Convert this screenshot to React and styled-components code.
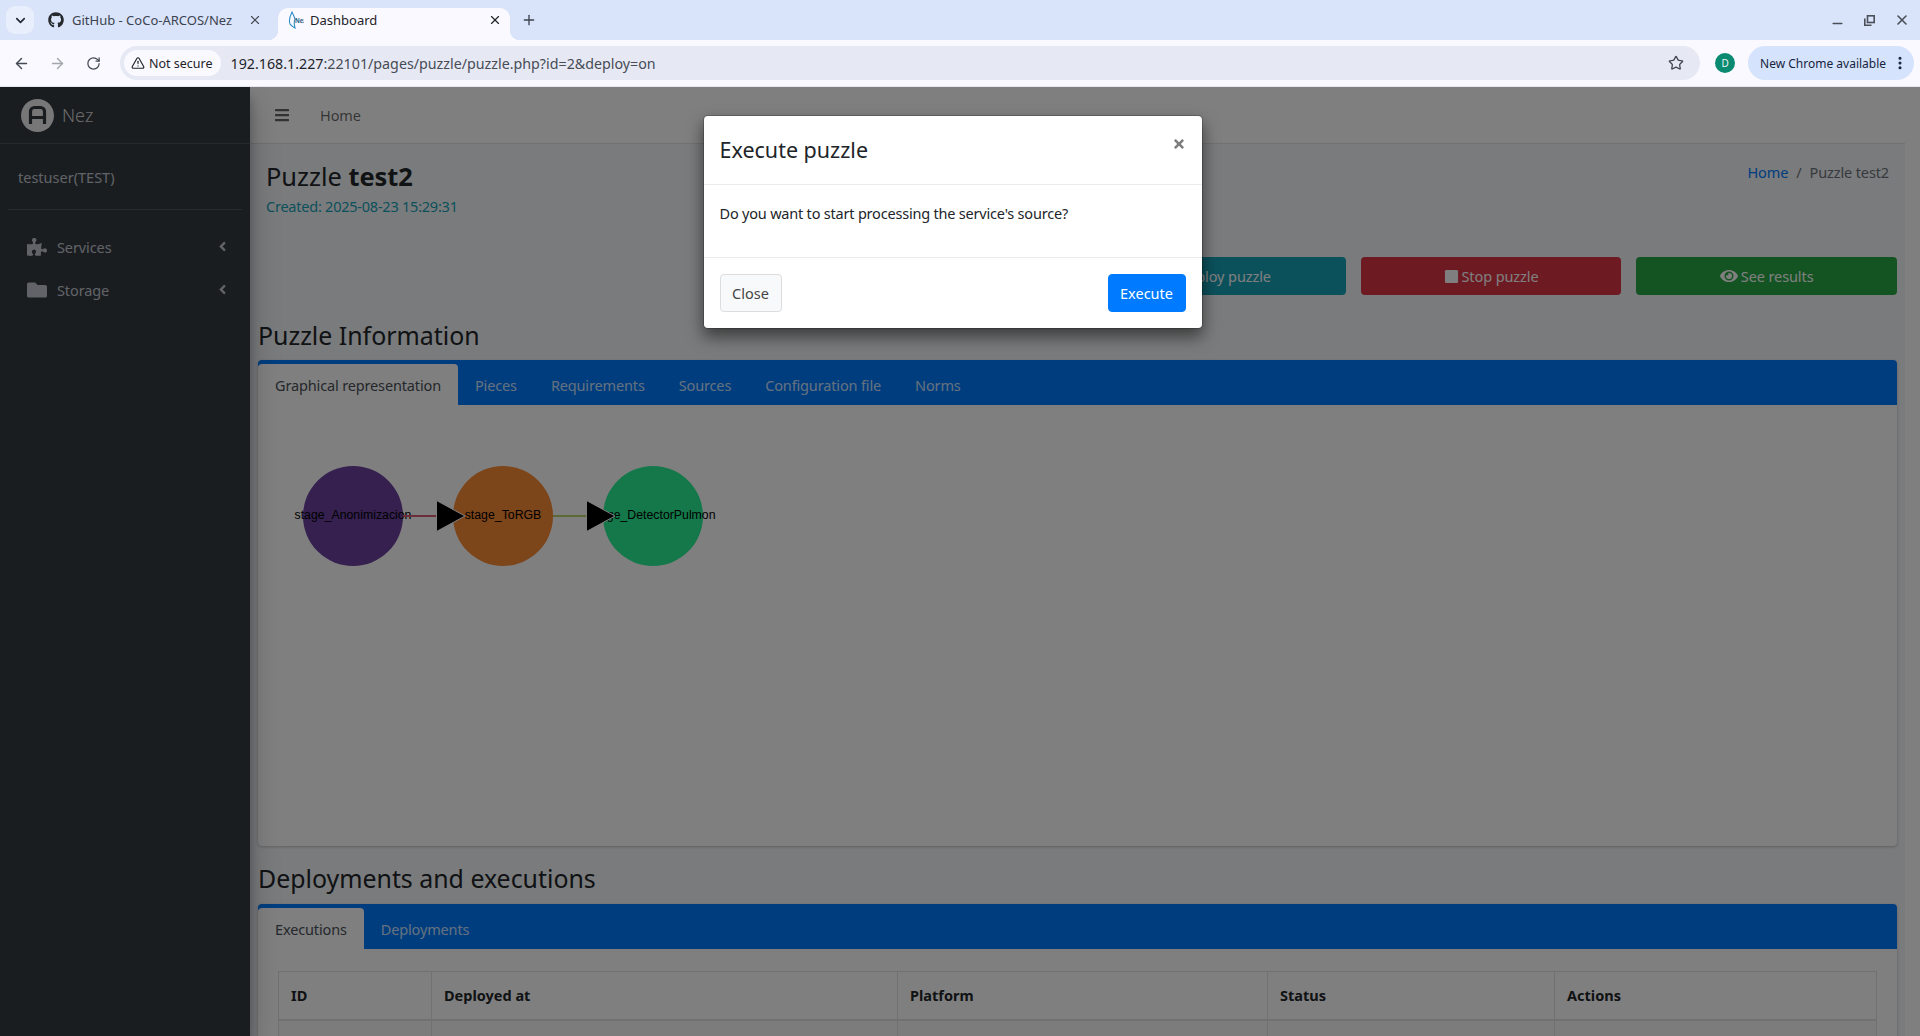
import React from 'react'
import styled, { createGlobalStyle } from 'styled-components'
import { FaGithub, FaPuzzlePiece, FaFolder, FaAngleLeft, FaBars, FaStop, FaEye, FaTimes, FaCloudUploadAlt } from 'react-icons/fa'
import { ArrowLeft, ArrowRight, RotateCw, Star, TriangleAlert, EllipsisVertical, ChevronDown, X, Plus, Minus } from 'lucide-react'

const Global = createGlobalStyle`
    html, body { margin: 0; height: 100%; overflow: hidden; }
    body { font-family: "Noto Sans", "Open Sans", sans-serif; color: #212529; }
    #root { height: 100%; }
    * { box-sizing: border-box; }
`

const Screen = styled.div`
    display: flex;
    flex-direction: column;
    width: 1920px;
    height: 1036px;
`

/* browser chrome */
const TabStrip = styled.div`
    display: flex;
    align-items: flex-end;
    height: 40px;
    padding-left: 6px;
    background: #d9e3f9;
`
const ExpandBtn = styled.div`
    display: flex;
    align-items: center;
    justify-content: center;
    width: 28px;
    height: 28px;
    margin: 0 4px 6px 0;
    border-radius: 9px;
    background: #e8eefc;
    color: #1f2937;
`
const Tab = styled.div`
    position: relative;
    display: flex;
    align-items: center;
    width: 232px;
    height: 32px;
    margin-right: 8px;
    padding: 0 8px 8px 10px;
    border-radius: 10px 10px 0 0;
    font-size: 13px;
    color: ${p => (p.$active ? '#1f2328' : '#3c4350')};
    background: ${p => (p.$active ? '#f9f9ff' : 'transparent')};
    ${p => p.$active && `
        &::before, &::after {
            content: '';
            position: absolute;
            bottom: 0;
            width: 10px;
            height: 10px;
        }
        &::before { left: -10px; background: radial-gradient(circle at 0 0, transparent 10px, #f9f9ff 10.5px); }
        &::after { right: -10px; background: radial-gradient(circle at 100% 0, transparent 10px, #f9f9ff 10.5px); }
    `}
`
const TabTitle = styled.span`
    flex: 1;
    min-width: 0;
    margin-left: ${p => p.$gap}px;
    white-space: nowrap;
`
const WindowControls = styled.div`
    display: flex;
    align-items: center;
    gap: 19px;
    margin-left: auto;
    padding: 0 10px 0 0;
    height: 40px;
    color: #4a4f58;
`
const NewTab = styled.div`
    display: flex;
    align-items: center;
    margin: 0 0 12px 3px;
    color: #3c4350;
`
const Toolbar = styled.div`
    display: flex;
    align-items: center;
    height: 47px;
    padding: 0 6px 0 13px;
    background: #f9f9ff;
    border-bottom: 1px solid #e6e6ee;
`
const NavIcon = styled.div`
    display: flex;
    justify-content: center;
    width: 18px;
    margin-right: 18px;
    color: ${p => (p.$off ? '#a3a7ad' : '#444a52')};
`
const AddressBar = styled.div`
    display: flex;
    align-items: center;
    width: 1581px;
    height: 34px;
    margin-left: -1px;
    padding: 0 16px 0 4px;
    border-radius: 17px;
    background: #e6e9f4;
    font-size: 14.25px;
`
const SecureChip = styled.div`
    display: flex;
    align-items: center;
    gap: 4px;
    height: 26px;
    padding: 0 8px 0 7px;
    border-radius: 13px;
    background: #f9f9ff;
    font-size: 12.5px;
    color: #1f2328;
`
const Url = styled.div`
    flex: 1;
    margin-left: 10px;
    color: #474c55;
    white-space: nowrap;
    b { font-weight: 400; color: #1f2328; }
`
const Avatar = styled.div`
    display: flex;
    align-items: center;
    justify-content: center;
    width: 20px;
    height: 20px;
    margin: 0 13px 0 15px;
    border-radius: 50%;
    background: #0b8a72;
    color: #e9f5f2;
    font-size: 10px;
`
const UpdatePill = styled.div`
    display: flex;
    align-items: center;
    justify-content: space-between;
    width: 166px;
    height: 34px;
    padding: 0 6px 0 12px;
    border-radius: 17px;
    background: #d5e3fc;
    color: #16233f;
    font-size: 12px;
    white-space: nowrap;
`

/* page */
const Page = styled.div`
    position: relative;
    flex: 1;
    display: flex;
    min-height: 0;
    overflow: hidden;
    background: #fff;
`
const Sidebar = styled.aside`
    width: 250px;
    flex-shrink: 0;
    background: #343a40;
    color: #c2c7d0;
    box-shadow: 0 14px 28px rgba(0, 0, 0, 0.25), 0 10px 10px rgba(0, 0, 0, 0.22);
    z-index: 1;
`
const Brand = styled.div`
    display: flex;
    align-items: center;
    gap: 8px;
    height: 57px;
    padding-left: 21px;
    border-bottom: 1px solid #4b545c;
    font-size: 18px;
    font-weight: 300;
    color: rgba(255, 255, 255, 0.8);
`
const UserPanel = styled.div`
    display: flex;
    align-items: center;
    height: 66px;
    margin: 0 8px;
    padding-left: 10px;
    border-bottom: 1px solid #4f5962;
    font-size: 14.5px;
`
const SideNav = styled.nav`
    padding-top: 15px;
`
const SideItem = styled.div`
    display: flex;
    align-items: center;
    height: 43px;
    padding: 0 20px 0 27px;
    font-size: 14.5px;
    letter-spacing: -0.1px;
    span { flex: 1; margin-left: 10px; }
`
const Main = styled.main`
    flex: 1;
    min-width: 0;
    margin-right: 15px;
    background: #f4f6f9;
`
const Navbar = styled.div`
    display: flex;
    align-items: center;
    height: 57px;
    padding-left: 24px;
    background: #fff;
    border-bottom: 1px solid #dee2e6;
    font-size: 14.5px;
    letter-spacing: -0.1px;
    color: rgba(0, 0, 0, 0.6);
    span { margin-left: 30px; }
`
const Content = styled.div`
    padding: 0 8px;
`
const ContentHeader = styled.div`
    display: flex;
    justify-content: space-between;
    height: 113px;
    padding: 14px 8px 0;
`
const PageTitle = styled.h1`
    margin: 0;
    font-size: 25.4px;
    font-weight: 400;
    line-height: 36px;
    b { font-weight: 700; }
`
const Created = styled.div`
    font-size: 14.5px;
    line-height: 24px;
    letter-spacing: -0.23px;
    color: #17a2b8;
`
const Breadcrumb = styled.div`
    display: flex;
    gap: 8px;
    height: 24px;
    margin-top: 2px;
    font-size: 14.5px;
    line-height: 24px;
    letter-spacing: -0.12px;
    color: #6c757d;
    a { color: #007bff; }
`
const ActionRow = styled.div`
    display: grid;
    grid-template-columns: repeat(6, 1fr);
    gap: 15px;
    height: 38px;
`
const ActionBtn = styled.div`
    grid-column: ${p => p.$col};
    display: flex;
    align-items: center;
    justify-content: center;
    gap: 3px;
    border-radius: 4px;
    background: ${p => p.$bg};
    color: #fff;
    font-size: 14.5px;
    letter-spacing: -0.1px;
`
const SectionTitle = styled.h3`
    margin: ${p => p.$top}px 0 ${p => p.$bottom}px;
    font-size: 24.9px;
    font-weight: 400;
    line-height: 34px;
`
const Card = styled.section`
    height: ${p => p.$height}px;
    background: #fff;
    border-radius: 4px;
    box-shadow: 0 0 1px rgba(0, 0, 0, 0.13), 0 1px 3px rgba(0, 0, 0, 0.2);
`
const TabBar = styled.div`
    display: flex;
    height: 45px;
    padding-top: 4px;
    background: #007bff;
    border-radius: 4px 4px 0 0;
`
const PageTab = styled.div`
    display: flex;
    align-items: center;
    padding: 0 17px;
    font-size: 14.5px;
    letter-spacing: -0.145px;
    border-radius: 4px 4px 0 0;
    color: ${p => (p.$active ? '#495057' : 'rgba(255, 255, 255, 0.8)')};
    background: ${p => (p.$active ? '#fff' : 'transparent')};
`
const Graph = styled.svg`
    display: block;
    margin: 60px 0 0 45px;
    overflow: visible;
    font-family: "Liberation Sans", Arial, sans-serif;
`
const TableWrap = styled.div`
    padding: 22px 20px 0;
`
const DataTable = styled.table`
    width: 100%;
    border-collapse: collapse;
    table-layout: fixed;
    font-size: 14.5px;
    th {
        height: 48px;
        padding: 0 12px;
        border: 1px solid #dee2e6;
        border-bottom-width: 2px;
        text-align: left;
        font-weight: 700;
    }
    td {
        height: 48px;
        border: 1px solid #dee2e6;
        background: #f9f9f9;
    }
`

/* modal */
const Backdrop = styled.div`
    position: absolute;
    inset: 0;
    z-index: 5;
    display: flex;
    justify-content: center;
    align-items: flex-start;
    padding: 28px 15px 0 0;
    background: rgba(0, 0, 0, 0.5);
`
const Modal = styled.div`
    width: 500px;
    background: #fff;
    border: 1px solid rgba(0, 0, 0, 0.2);
    border-radius: 4.8px;
    background-clip: padding-box;
    box-shadow: 0 8px 16px rgba(0, 0, 0, 0.5);
`
const ModalHeader = styled.div`
    position: relative;
    display: flex;
    align-items: center;
    height: 69px;
    padding: 0 16px 2px;
    border-bottom: 1px solid #e9ecef;
    font-size: 21.5px;
`
const CloseX = styled.div`
    position: absolute;
    top: 21px;
    right: 16px;
    display: flex;
    color: #7d7d7d;
`
const ModalBody = styled.div`
    height: 72px;
    padding: 16px 16px 0;
    font-size: 14.5px;
    line-height: 24px;
    letter-spacing: -0.2px;
`
const ModalFooter = styled.div`
    display: flex;
    justify-content: space-between;
    align-items: center;
    height: 71px;
    padding: 0 16px;
    border-top: 1px solid #e9ecef;
`
const ModalBtn = styled.div`
    display: flex;
    align-items: center;
    justify-content: center;
    width: ${p => p.$w}px;
    height: 38px;
    border-radius: 4px;
    border: 1px solid ${p => (p.$primary ? '#007bff' : '#ddd')};
    background: ${p => (p.$primary ? '#007bff' : '#f8f9fa')};
    color: ${p => (p.$primary ? '#fff' : '#444')};
    font-size: 14.5px;
`

const RestoreIcon = () => (
    <svg width="11" height="11" viewBox="0 0 11 11" fill="none" stroke="currentColor" strokeWidth="1.6">
        <rect x="3.5" y="0.8" width="6.7" height="6.7" />
        <path d="M0.8 3.5v6.7h6.7" />
    </svg>
)

const NezFavicon = () => (
    <svg width="16" height="18" viewBox="0 0 16 18">
        <path d="M4 1C2 5 .5 9 2 13c1 2 3 3 5 4-1-4-1-7 0-9C6 5 5 3 4 1z" fill="none" stroke="#2f8fc4" strokeWidth="1.1" />
        <text x="7" y="11.5" fontSize="6.5" fontWeight="700" fill="#1d5f86" fontFamily="Liberation Sans, sans-serif">Nez</text>
    </svg>
)

const NezLogo = () => (
    <svg width="33" height="33" viewBox="0 0 33 33">
        <circle cx="16.5" cy="16.5" r="16.5" fill="#efefef" />
        <path d="M9.5 25V12.5a4 4 0 0 1 4-4h6a4 4 0 0 1 4 4V25M9.5 18.5h14" fill="none" stroke="#343a40" strokeWidth="3.2" />
    </svg>
)

const nodes = [
    { cx: 50, fill: '#6a409e', label: 'stage_Anonimizacion' },
    { cx: 200, fill: '#fa8a34', label: 'stage_ToRGB' },
    { cx: 350, fill: '#28f094', label: 'stage_DetectorPulmon' },
]

function PuzzleGraph() {
    return (
        <Graph width="420" height="102" viewBox="0 0 420 102">
            {nodes.map(n => (
                <circle key={n.cx} cx={n.cx} cy="51" r="50" fill={n.fill} />
            ))}
            {nodes.map(n => (
                <text key={n.label} x={n.cx} y="50" dy="4.3" fontSize="12.3" textAnchor="middle" fill="#000">{n.label}</text>
            ))}
            <path d="M100 51h34" stroke="#d65a72" strokeWidth="2" />
            <path d="M250 51h34" stroke="#bcd468" strokeWidth="2" />
            <path d="M133.5 35.5 162 51 133.5 66.5z" fill="#000" stroke="#fff" strokeWidth="1" />
            <path d="M283.5 35.5 312 51 283.5 66.5z" fill="#000" stroke="#fff" strokeWidth="1" />
        </Graph>
    )
}

function Browser() {
    return (
        <React.Fragment>
            <TabStrip>
                <ExpandBtn><ChevronDown size={15} strokeWidth={2.6} /></ExpandBtn>
                <Tab>
                    <FaGithub size={16} color="#24292f" />
                    <TabTitle $gap={8}>GitHub - CoCo-ARCOS/Nez</TabTitle>
                    <X size={14} color="#444a52" />
                </Tab>
                <Tab $active>
                    <NezFavicon />
                    <TabTitle $gap={6}>Dashboard</TabTitle>
                    <X size={14} color="#1f2328" />
                </Tab>
                <NewTab><Plus size={16} /></NewTab>
                <WindowControls>
                    <Minus size={15} strokeWidth={2.2} style={{ marginTop: 6 }} />
                    <RestoreIcon />
                    <X size={16} strokeWidth={2.4} />
                </WindowControls>
            </TabStrip>
            <Toolbar>
                <NavIcon><ArrowLeft size={17} /></NavIcon>
                <NavIcon $off><ArrowRight size={17} /></NavIcon>
                <NavIcon><RotateCw size={15} /></NavIcon>
                <AddressBar>
                    <SecureChip><TriangleAlert size={14} />Not secure</SecureChip>
                    <Url><b>192.168.1.227</b>:22101/pages/puzzle/puzzle.php?id=2&amp;deploy=on</Url>
                    <Star size={16} color="#444a52" />
                </AddressBar>
                <Avatar>D</Avatar>
                <UpdatePill>New Chrome available<EllipsisVertical size={16} strokeWidth={2.6} /></UpdatePill>
            </Toolbar>
        </React.Fragment>
    )
}

function App() {
    return (
        <Screen>
            <Global />
            <Browser />
            <Page>
                <Sidebar>
                    <Brand><NezLogo />Nez</Brand>
                    <UserPanel>testuser(TEST)</UserPanel>
                    <SideNav>
                        <SideItem><FaPuzzlePiece size={20} /><span>Services</span><FaAngleLeft size={15} /></SideItem>
                        <SideItem><FaFolder size={20} /><span>Storage</span><FaAngleLeft size={15} /></SideItem>
                    </SideNav>
                </Sidebar>
                <Main>
                    <Navbar><FaBars size={16} /><span>Home</span></Navbar>
                    <Content>
                        <ContentHeader>
                            <div>
                                <PageTitle>Puzzle <b>test2</b></PageTitle>
                                <Created>Created: 2025-08-23 15:29:31</Created>
                            </div>
                            <Breadcrumb><a>Home</a><span>/</span><span>Puzzle test2</span></Breadcrumb>
                        </ContentHeader>
                        <ActionRow>
                            <ActionBtn $col={4} $bg="#17a2b8"><FaCloudUploadAlt size={15} />Deploy puzzle</ActionBtn>
                            <ActionBtn $col={5} $bg="#dc3545"><FaStop size={15} />Stop puzzle</ActionBtn>
                            <ActionBtn $col={6} $bg="#28a745"><FaEye size={18} />See results</ActionBtn>
                        </ActionRow>
                        <SectionTitle $top={23} $bottom={8}>Puzzle Information</SectionTitle>
                        <Card $height={486}>
                            <TabBar>
                                <PageTab $active>Graphical representation</PageTab>
                                <PageTab>Pieces</PageTab>
                                <PageTab>Requirements</PageTab>
                                <PageTab>Sources</PageTab>
                                <PageTab>Configuration file</PageTab>
                                <PageTab>Norms</PageTab>
                            </TabBar>
                            <PuzzleGraph />
                        </Card>
                        <SectionTitle $top={15} $bottom={9}>Deployments and executions</SectionTitle>
                        <Card $height={300}>
                            <TabBar>
                                <PageTab $active>Executions</PageTab>
                                <PageTab>Deployments</PageTab>
                            </TabBar>
                            <TableWrap>
                                <DataTable>
                                    <colgroup>
                                        <col style={{ width: 153 }} />
                                        <col style={{ width: 466 }} />
                                        <col style={{ width: 370 }} />
                                        <col style={{ width: 287 }} />
                                        <col />
                                    </colgroup>
                                    <thead>
                                        <tr><th>ID</th><th>Deployed at</th><th>Platform</th><th>Status</th><th>Actions</th></tr>
                                    </thead>
                                    <tbody>
                                        <tr><td /><td /><td /><td /><td /></tr>
                                    </tbody>
                                </DataTable>
                            </TableWrap>
                        </Card>
                    </Content>
                </Main>
                <Backdrop>
                    <Modal>
                        <ModalHeader>
                            Execute puzzle
                            <CloseX><FaTimes size={14} /></CloseX>
                        </ModalHeader>
                        <ModalBody>Do you want to start processing the service's source?</ModalBody>
                        <ModalFooter>
                            <ModalBtn $w={62}>Close</ModalBtn>
                            <ModalBtn $w={78} $primary>Execute</ModalBtn>
                        </ModalFooter>
                    </Modal>
                </Backdrop>
            </Page>
        </Screen>
    )
}

export default App
